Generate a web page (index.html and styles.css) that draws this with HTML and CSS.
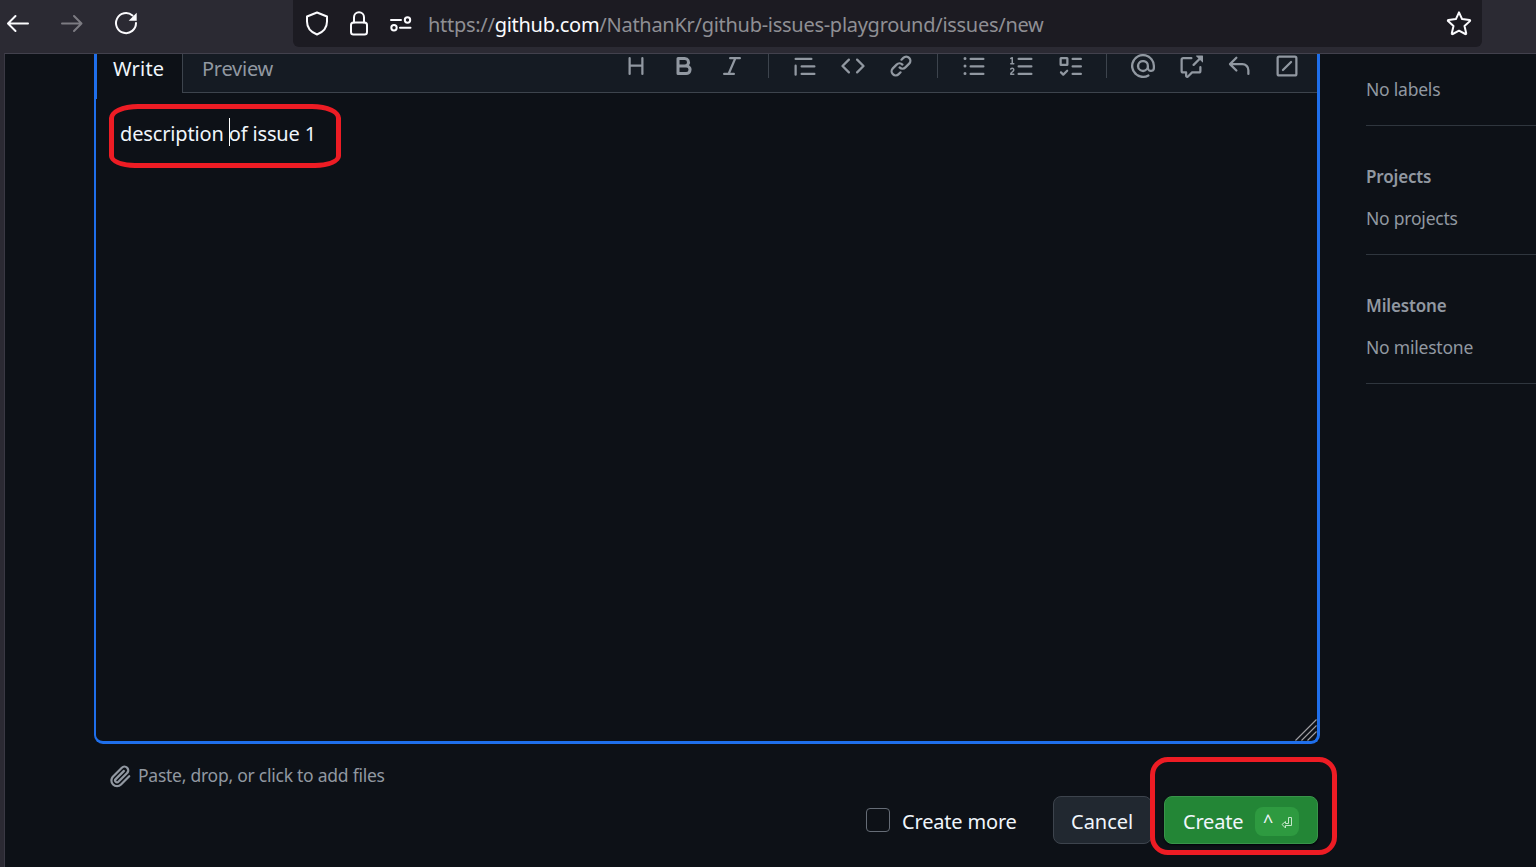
FILE: index.html
```html
<!DOCTYPE html>
<html lang="en">
<head>
<meta charset="utf-8">
<title>New Issue</title>
<link rel="stylesheet" href="styles.css">
</head>
<body>
<header class="chrome">
  <nav class="nav-buttons">
    <svg width="24" height="24" viewBox="0 0 24 24" class="line"><path d="M22 12.500H2.500M9.500 5L2 12.500l7.500 7.500"/></svg>
    <svg width="24" height="24" viewBox="0 0 24 24" class="line disabled"><path d="M2 12.500h19.500M14 5l7.500 7.500-7.500 7.500"/></svg>
    <svg width="24" height="24" viewBox="0 0 24 24" class="line"><path d="M22 12A10 10 0 1 1 18.500 4.500"/><path class="solid" d="M22.700 1.800V9.800H14.700Z"/></svg>
  </nav>
  <div class="urlbar">
    <svg class="line shield" width="24" height="26" viewBox="0 0 24 26"><path d="M12 1.500L22 5.500v5C22 16.500 18.500 21 12 23.500 5.500 21 2 16.500 2 10.500V5.500Z"/></svg>
    <svg class="line lock" width="20" height="26" viewBox="0 0 20 26"><rect x="2" y="11.500" width="16" height="12" rx="2.500"/><path d="M5 11.500V6.200a5 5 0 0 1 10 0V11.500"/></svg>
    <svg class="line sliders" width="24" height="18" viewBox="0 0 24 18"><path d="M2 5h10M11 12.700h10.500"/><circle cx="18.500" cy="5" r="2.700"/><circle cx="5" cy="12.700" r="2.700"/></svg>
    <span class="url">https://<b>github.com</b>/NathanKr/github-issues-playground/issues/new</span>
    <svg class="line star" width="26" height="26" viewBox="0 0 26 26"><path d="M13 1.300L16.100 8.100 23.500 8.900a.7.700 0 0 1 .4 1.200L18.500 15.100 20.200 22.300a.6.600 0 0 1-.9.700L13 19.700 6.700 23a.6.600 0 0 1-.9-.7L7.500 15.100 2.100 10.100a.7.700 0 0 1 .4-1.200L9.900 8.100Z"/></svg>
  </div>
</header>
<div class="page">
  <main class="main">
    <section class="editor">
      <div class="editor-head">
        <div class="tab active"><span class="t-write">Write</span></div>
        <div class="toolbar">
          <span class="t-preview">Preview</span>
          <div class="tools">
            <svg class="icon" viewBox="0 0 16 16"><path d="M3.750 2a.75.750 0 0 1 .75.750V7h7V2.750a.75.750 0 0 1 1.500 0v10.500a.75.750 0 0 1-1.500 0V8.500h-7v4.750a.75.750 0 0 1-1.500 0V2.750A.75.750 0 0 1 3.750 2Z"/></svg>
            <svg class="icon" viewBox="0 0 16 16"><path d="M4 2h4.500a3.501 3.501 0 0 1 2.852 5.530A3.499 3.499 0 0 1 9.500 14H4a1 1 0 0 1-1-1V3a1 1 0 0 1 1-1Zm1 7v3h4.500a1.500 1.500 0 0 0 0-3Zm3.500-2a1.500 1.500 0 0 0 0-3H5v3Z"/></svg>
            <svg class="icon" viewBox="0 0 16 16"><path d="M6 2.750A.75.750 0 0 1 6.750 2h6.500a.75.750 0 0 1 0 1.500h-2.505l-3.858 9H9.250a.75.750 0 0 1 0 1.500h-6.500a.75.750 0 0 1 0-1.500h2.505l3.858-9H6.750A.75.750 0 0 1 6 2.750Z"/></svg>
            <i class="divider"></i>
            <svg class="icon" viewBox="0 0 16 16"><path d="M1.750 2.500h10.500a.75.750 0 0 1 0 1.500H1.750a.75.750 0 0 1 0-1.500Zm4 5h8.500a.75.750 0 0 1 0 1.500h-8.500a.75.750 0 0 1 0-1.500Zm0 5h8.500a.75.750 0 0 1 0 1.500h-8.500a.75.750 0 0 1 0-1.500ZM2.500 7.750v6a.75.750 0 0 1-1.500 0v-6a.75.750 0 0 1 1.500 0Z"/></svg>
            <svg class="icon" viewBox="0 0 16 16"><path d="m11.280 3.220 4.250 4.250a.75.750 0 0 1 0 1.060l-4.250 4.250a.749.749 0 0 1-1.275-.326.749.749 0 0 1 .215-.734L13.940 8l-3.720-3.720a.749.749 0 0 1 .326-1.275.749.749 0 0 1 .734.215Zm-6.560 0a.751.751 0 0 1 1.042.018.751.751 0 0 1 .018 1.042L2.060 8l3.720 3.720a.749.749 0 0 1-.326 1.275.749.749 0 0 1-.734-.215L.47 8.530a.75.750 0 0 1 0-1.060Z"/></svg>
            <svg class="icon" viewBox="0 0 16 16"><path d="m7.775 3.275 1.250-1.250a3.500 3.500 0 1 1 4.950 4.950l-2.500 2.500a3.500 3.500 0 0 1-4.950 0 .751.751 0 0 1 .018-1.042.751.751 0 0 1 1.042-.018 1.998 1.998 0 0 0 2.830 0l2.500-2.500a2.002 2.002 0 0 0-2.830-2.830l-1.250 1.250a.751.751 0 0 1-1.042-.018.751.751 0 0 1-.018-1.042Zm-4.690 9.640a1.998 1.998 0 0 0 2.830 0l1.250-1.250a.751.751 0 0 1 1.042.018.751.751 0 0 1 .018 1.042l-1.250 1.250a3.500 3.500 0 1 1-4.950-4.950l2.500-2.500a3.500 3.500 0 0 1 4.950 0 .751.751 0 0 1-.018 1.042.751.751 0 0 1-1.042.018 1.998 1.998 0 0 0-2.830 0l-2.500 2.500a1.998 1.998 0 0 0 0 2.830Z"/></svg>
            <i class="divider"></i>
            <svg class="icon" viewBox="0 0 16 16"><path d="M5.750 2.500h8.500a.75.750 0 0 1 0 1.500h-8.500a.75.750 0 0 1 0-1.500Zm0 5h8.500a.75.750 0 0 1 0 1.500h-8.500a.75.750 0 0 1 0-1.500Zm0 5h8.500a.75.750 0 0 1 0 1.500h-8.500a.75.750 0 0 1 0-1.500ZM2 14a1 1 0 1 1 0-2 1 1 0 0 1 0 2Zm1-6a1 1 0 1 1-2 0 1 1 0 0 1 2 0ZM2 4a1 1 0 1 1 0-2 1 1 0 0 1 0 2Z"/></svg>
            <svg class="icon" viewBox="0 0 16 16"><path d="M5 3.250a.75.750 0 0 1 .75-.75h8.500a.75.750 0 0 1 0 1.500h-8.500A.75.750 0 0 1 5 3.250Zm0 5a.75.750 0 0 1 .75-.75h8.500a.75.750 0 0 1 0 1.500h-8.500A.75.750 0 0 1 5 8.250Zm0 5a.75.750 0 0 1 .75-.75h8.500a.75.750 0 0 1 0 1.500h-8.500a.75.750 0 0 1-.75-.75ZM.924 10.320a.5.500 0 0 1-.851-.525l.001-.001.001-.002.002-.004.007-.011c.097-.144.215-.273.348-.384.228-.19.588-.392 1.068-.392.468 0 .858.181 1.126.484.259.294.377.673.377 1.038 0 .987-.686 1.495-1.156 1.845l-.047.035c-.303.225-.522.400-.654.597h1.357a.5.500 0 0 1 0 1H.5a.5.500 0 0 1-.5-.5c0-1.005.692-1.520 1.167-1.875l.035-.025c.531-.396.800-.625.800-1.078a.57.570 0 0 0-.128-.376C1.806 10.068 1.695 10 1.500 10a.658.658 0 0 0-.429.163.835.835 0 0 0-.144.153ZM2.003 2.500V6h.503a.5.500 0 0 1 0 1H.5a.5.500 0 0 1 0-1h.503V3.308l-.28.140a.5.500 0 0 1-.446-.895l1.003-.5a.5.500 0 0 1 .723.447Z"/></svg>
            <svg class="icon" viewBox="0 0 16 16"><path d="M2 2h4a1 1 0 0 1 1 1v4a1 1 0 0 1-1 1H2a1 1 0 0 1-1-1V3a1 1 0 0 1 1-1Zm4.655 8.595a.75.750 0 0 1 0 1.060L4.030 14.280a.75.750 0 0 1-1.060 0l-1.500-1.500a.749.749 0 0 1 .326-1.275.749.749 0 0 1 .734.215l.97.970 2.095-2.095a.75.750 0 0 1 1.060 0ZM9.750 2.500h5.500a.75.750 0 0 1 0 1.500h-5.500a.75.750 0 0 1 0-1.500Zm0 5h5.500a.75.750 0 0 1 0 1.500h-5.500a.75.750 0 0 1 0-1.500Zm0 5h5.500a.75.750 0 0 1 0 1.500h-5.500a.75.750 0 0 1 0-1.500Zm-7.250-9v3h3v-3Z"/></svg>
            <i class="divider"></i>
            <svg class="icon" viewBox="0 0 16 16"><path d="M4.750 2.370a6.501 6.501 0 0 0 6.500 11.260.75.750 0 0 1 .75 1.298A7.999 7.999 0 0 1 .989 4.148 8 8 0 0 1 16 7.750v1.500a2.750 2.750 0 0 1-5.072 1.475 3.999 3.999 0 0 1-6.650-4.190A4 4 0 0 1 12 8v1.250a1.250 1.250 0 0 0 2.500 0V7.867a6.500 6.500 0 0 0-9.750-5.496ZM10.500 8a2.500 2.500 0 1 0-5 0 2.500 2.500 0 0 0 5 0Z"/></svg>
            <svg class="icon" viewBox="0 0 16 16"><path d="M2.750 3.500a.25.250 0 0 0-.25.250v7.500c0 .138.112.250.250.250h2a.75.750 0 0 1 .75.750v2.190l2.720-2.720a.749.749 0 0 1 .53-.22h4.500a.25.250 0 0 0 .25-.25v-2.500a.75.750 0 0 1 1.500 0v2.500A1.750 1.750 0 0 1 13.250 13H9.060l-2.573 2.573A1.458 1.458 0 0 1 4 14.543V13H2.750A1.750 1.750 0 0 1 1 11.250v-7.500C1 2.784 1.784 2 2.750 2h5.500a.75.750 0 0 1 0 1.500ZM16 1.250v4.146a.25.250 0 0 1-.427.177L14.030 4.030l-3.750 3.750a.749.749 0 0 1-1.275-.326.749.749 0 0 1 .215-.734l3.750-3.750-1.543-1.543A.25.250 0 0 1 11.604 1h4.146a.25.250 0 0 1 .25.250Z"/></svg>
            <svg class="icon" viewBox="0 0 16 16"><path d="M6.780 1.970a.75.750 0 0 1 0 1.060L3.810 6h6.440A4.750 4.750 0 0 1 15 10.750v2.500a.75.750 0 0 1-1.500 0v-2.500a3.250 3.250 0 0 0-3.250-3.250H3.810l2.970 2.970a.749.749 0 0 1-.326 1.275.749.749 0 0 1-.734-.215L1.470 7.280a.75.750 0 0 1 0-1.060l4.250-4.250a.75.750 0 0 1 1.060 0Z"/></svg>
            <svg class="icon stroked" viewBox="0 0 16 16"><rect x="1.750" y="1.750" width="12.500" height="12.500" rx="1"/><path d="M5.300 10.700l5.400-5.400"/></svg>
          </div>
        </div>
      </div>
      <div class="editor-body">
        <span class="t-desc">description of issue 1</span>
        <i class="caret"></i>
        <svg class="grip" width="22" height="22" viewBox="0 0 22 22"><path d="M.5 21.500L21.500 .5M6.500 21.500L21.500 6.500M12.500 21.500l9-9"/></svg>
      </div>
      <i class="thick-edge"></i>
      <i class="mark mark-desc"></i>
    </section>
    <div class="attach">
      <svg class="icon clip" viewBox="0 0 16 16"><path d="M12.212 3.020a1.753 1.753 0 0 0-2.478.003l-5.830 5.830a3.007 3.007 0 0 0-.88 2.127c0 .795.315 1.551.880 2.116.567.567 1.333.890 2.126.890.790 0 1.548-.321 2.116-.89l5.480-5.480a.75.750 0 0 1 1.061 1.060l-5.480 5.480a4.492 4.492 0 0 1-3.177 1.330c-1.200 0-2.345-.487-3.187-1.330a4.483 4.483 0 0 1-1.320-3.177c0-1.195.475-2.341 1.320-3.186l5.830-5.830a3.250 3.250 0 0 1 5.553 2.297c0 .863-.343 1.691-.953 2.301L7.439 12.390c-.375.377-.884.590-1.416.593a1.998 1.998 0 0 1-1.412-.593 1.992 1.992 0 0 1 0-2.828l5.480-5.480a.751.751 0 0 1 1.042.018.751.751 0 0 1 .018 1.042l-5.480 5.480a.492.492 0 0 0 0 .707.499.499 0 0 0 .352.154.51.510 0 0 0 .356-.154l5.833-5.827a1.755 1.755 0 0 0 0-2.481Z"/></svg>
      <span class="t-paste">Paste, drop, or click to add files</span>
    </div>
    <div class="actions">
      <i class="checkbox"></i>
      <span class="t-more">Create more</span>
      <div class="btn cancel"><span class="t-cancel">Cancel</span></div>
      <div class="btn create"><span class="t-create">Create</span>
        <span class="keys"><span class="ctrl">^</span><svg width="12" height="13" viewBox="0 0 12 13"><path d="M7.500 1.500h3v8H4.500V12L1 8.500 4.500 5.500V7.500h3Z"/></svg></span>
      </div>
      <i class="mark mark-create"></i>
    </div>
  </main>
  <aside class="sidebar">
    <section class="meta first"><p>No labels</p></section>
    <section class="meta"><h3>Projects</h3><p>No projects</p></section>
    <section class="meta"><h3>Milestone</h3><p>No milestone</p></section>
  </aside>
</div>
</body>
</html>
```
FILE: styles.css
```css
* { box-sizing: border-box; }
body {
  margin: 0;
  height: 867px;
  overflow: hidden;
  display: flex;
  flex-direction: column;
  background: #2b2a33;
  color: #f0f6fc;
  font-family: "Noto Sans", "Open Sans", sans-serif;
  font-size: 20px;
}
svg { display: block; flex: none; }
span { white-space: nowrap; }

.chrome { display: flex; height: 53px; flex: none; align-items: flex-start; }
.nav-buttons { display: flex; gap: 30px; width: 293px; padding: 11px 0 0 6px; }
.line { fill: none; stroke: #fbfbfe; stroke-width: 2; stroke-linejoin: round; stroke-linecap: round; }
.line .solid { fill: #fbfbfe; stroke: none; }
.disabled { stroke: #7c7b82; }
.urlbar { display: flex; align-items: center; width: 1189px; height: 47px; background: #1c1b22; border-radius: 0 0 6px 6px; padding: 0 10px 0 12px; }
.lock { margin-left: 20px; }
.sliders { margin-left: 20px; }
.url { margin-left: 15px; color: #8f8f94; line-height: 47px; padding-top: 2px; letter-spacing: -0.28px; }
.url b { font-weight: 400; color: #fbfbfe; }
.star { margin-left: auto; }

.page { flex: 1; display: flex; margin-left: 4px; border-top: 1px solid #42414d; border-left: 1px solid #3a3944; background: #0d1117; }
.main { width: 1315px; padding-left: 89px; flex: none; }
.editor { position: relative; height: 690px; border: solid #1f6feb; border-width: 0 3px 3px 2px; border-radius: 0 0 9px 9px; display: flex; flex-direction: column; }
.thick-edge { position: absolute; left: -2px; top: 0; width: 3px; height: 45px; background: #1f6feb; }
.editor-head { display: flex; height: 39px; }
.tab { width: 86px; padding-left: 17px; line-height: 30px; letter-spacing: 0.2px; }
.toolbar { flex: 1; display: flex; justify-content: space-between; background: #151b23; border: solid #3d444d; border-width: 0 0 1px 1px; padding: 0 18px 0 19px; }
.t-preview { line-height: 30px; color: #9198a1; letter-spacing: -0.25px; }
.tools { display: flex; gap: 24px; height: 24px; }
.icon { width: 24px; height: 24px; fill: #9198a1; }
.stroked { fill: none; stroke: #9198a1; stroke-width: 1.5; stroke-linecap: round; }
.divider { width: 1px; height: 24px; background: #3d444d; }
.editor-body { position: relative; flex: 1; padding: 25px 0 0 24px; line-height: 31px; }
.t-desc { letter-spacing: -0.15px; }
.caret { position: absolute; left: 133px; top: 25px; width: 1px; height: 28px; background: #fff; }
.grip { position: absolute; right: 0; bottom: 0; fill: none; stroke: #a0a0a3; stroke-width: 1.1; }

.attach { display: flex; align-items: center; height: 52px; padding: 12px 0 2px 14px; color: #9198a1; font-size: 17.5px; gap: 6px; }
.clip { margin-top: 2px; }
.t-paste { letter-spacing: -0.25px; }
.actions { position: relative; display: flex; height: 48px; align-items: center; padding-left: 772px; }
.checkbox { width: 24px; height: 24px; border: 1px solid #656c76; border-radius: 4px; }
.t-more { width: 115px; margin: 2px 36px 0 12px; letter-spacing: -0.18px; }
.btn { display: flex; align-items: center; height: 48px; border: 1px solid #3d444d; border-radius: 8px; background: #212830; padding: 2px 0 0 17px; }
.cancel { width: 99px; margin-right: 12px; }
.create { width: 154px; padding-left: 18px; background: #238636; border-color: #39944a; gap: 12px; box-shadow: 0 1px 2px #010409; }
.t-create { width: 60px; letter-spacing: -0.2px; }
.keys { display: flex; align-items: center; width: 44px; height: 29px; border-radius: 8px; background: #2e9a40; padding-left: 8px; gap: 8px; }
.keys svg { fill: none; stroke: #c5e6cb; stroke-width: 1; margin-top: 2px; }
.ctrl { font-size: 18px; width: 10px; }

.mark { position: absolute; border: 5px solid #ed1c24; }
.mark-desc { left: 13px; top: 50px; width: 232px; height: 64px; border-radius: 29px 29px 26px 26px / 14px 14px 12px 12px; }
.mark-create { left: 1056px; top: -39px; width: 187px; height: 98px; border-radius: 18px; }

.sidebar { flex: 1; margin-left: 46px; color: #9198a1; font-size: 17.5px; letter-spacing: -0.22px; }
.meta { height: 129px; border-bottom: 1px solid #2f363e; padding-top: 38px; }
.meta.first { height: 72px; padding-top: 22px; }
.meta h3 { margin: 0 0 15px; font-size: 17px; font-weight: 600; line-height: 26px; letter-spacing: -0.15px; }
.meta p { margin: 0; line-height: 26px; }
```
